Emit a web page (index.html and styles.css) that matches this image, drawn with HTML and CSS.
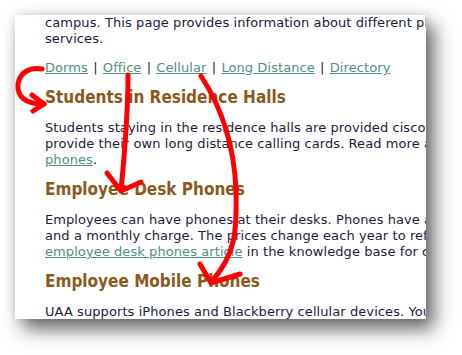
FILE: index.html
```html
<!DOCTYPE html>
<html lang="en">
<head>
    <meta charset="UTF-8">
    <meta name="viewport" content="width=device-width, initial-scale=1.0">
    <title>Phone Services</title>
    <link rel="stylesheet" href="styles.css">
</head>
<body>
    <div class="shot">
        <div class="page">
            <div class="content">
                <p>campus. This page provides information about different phone and voice<br>services.</p>
                <p class="nav">
                    <a href="#dorms">Dorms</a> <span class="sep">|</span>
                    <a href="#office">Office</a> <span class="sep">|</span>
                    <a href="#cellular">Cellular</a> <span class="sep">|</span>
                    <a href="#ld">Long Distance</a> <span class="sep">|</span>
                    <a href="#dir">Directory</a>
                </p>
                <h2 id="dorms">Students in Residence Halls</h2>
                <p>Students staying in the residence halls are provided cisco IP phones and must<br>provide their own long distance calling cards. Read more about <a href="#">dorm<br>phones</a>.</p>
                <h2 id="office">Employee Desk Phones</h2>
                <p>Employees can have phones at their desks. Phones have a one-time setup fee<br>and a monthly charge. The prices change each year to reflect costs. See the<br><a href="#">employee desk phones article</a> in the knowledge base for current prices.</p>
                <h2 id="cellular">Employee Mobile Phones</h2>
                <p>UAA supports iPhones and Blackberry cellular devices. You can order one<br>through your department.</p>
            </div>
        </div>
        <!-- hand drawn arrows on top of the screenshot -->
        <svg class="marks" width="462" height="355" viewBox="0 0 462 355">
            <g fill="none" stroke="#ff0000" stroke-width="5" stroke-linecap="round" stroke-linejoin="round">
                <path d="M42 69 C30 67 20 72 18 84 C17 96 24 104 44 104"/>
                <path d="M32 95 L44 104 L33 111"/>
                <path d="M128 75 C128 110 125 150 121 190"/>
                <path d="M107 173 L121 191 L141 182"/>
                <path d="M201 76 C220 105 234 140 236 190 C237 230 236 255 211 282"/>
                <path d="M200 264 L211 283 L240 274"/>
            </g>
        </svg>
    </div>
</body>
</html>
```

FILE: styles.css
```css
body {
    margin: 0;
    background: #ffffff;
}
.shot {
    position: relative;
    width: 462px;
    height: 355px;
    padding: 15px 0 0 15px;
    box-sizing: border-box;
    overflow: hidden;
}
.page {
    width: 411px;
    height: 304px;
    background: #ffffff;
    overflow: hidden;
    box-shadow: 8px 10px 18px rgba(0, 0, 0, 0.6), 0 0 10px rgba(0, 0, 0, 0.12);
}
.content {
    padding-left: 30px;
    width: 560px;
    white-space: nowrap;
    font-family: "DejaVu Sans", Verdana, sans-serif;
    font-size: 13px;
    letter-spacing: 0.08px;
    line-height: 16px;
    color: #1c1c3c;
}
.content p {
    margin: 0 0 13px;
}
.content a {
    color: #4e8f85;
    text-decoration: underline;
}
.sep {
    color: #1c1c3c;
    margin: 0 1px;
}
h2 {
    margin: 0 0 15px;
    font-family: "DejaVu Sans Condensed", "DejaVu Sans", sans-serif;
    font-stretch: condensed;
    font-size: 17px;
    line-height: 16px;
    letter-spacing: 0;
    font-weight: bold;
    color: #8b5a1e;
}
.marks {
    position: absolute;
    left: 0;
    top: 0;
}
```
